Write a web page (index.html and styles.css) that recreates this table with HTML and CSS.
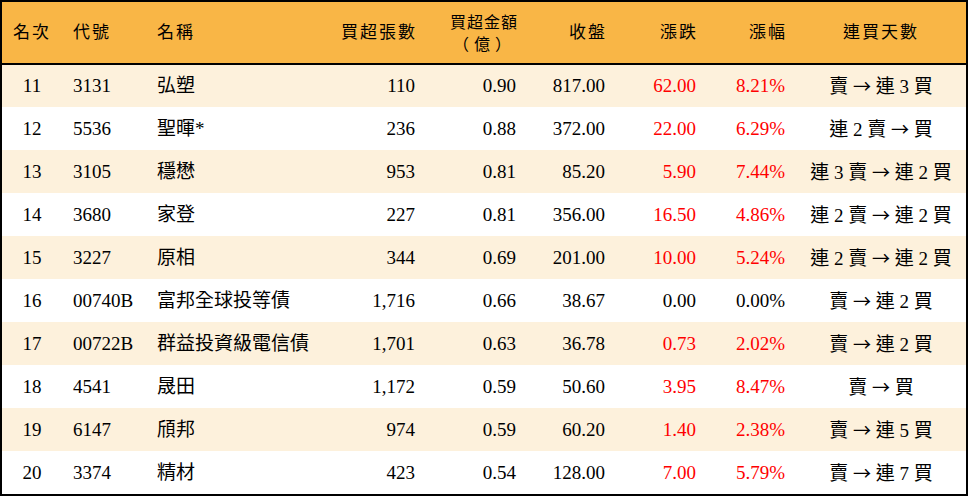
FILE: index.html
```html
<!DOCTYPE html>
<html lang="zh-Hant">
<head>
<meta charset="utf-8">
<title>買超排行</title>
<link rel="stylesheet" href="styles.css">
</head>
<body>
<div class="frame">
<table class="rank">
<colgroup>
<col class="c-rank"><col class="c-code"><col class="c-name"><col class="c-vol"><col class="c-amt"><col class="c-close"><col class="c-chg"><col class="c-pct"><col class="c-days">
</colgroup>
<thead>
<tr>
<th class="ctr">名次</th>
<th class="lft">代號</th>
<th class="lft">名稱</th>
<th class="rgt">買超張數</th>
<th class="rgt two"><span class="line">買超金額</span><span class="line unit">（億）</span></th>
<th class="rgt">收盤</th>
<th class="rgt">漲跌</th>
<th class="rgt">漲幅</th>
<th class="ctr">連買天數</th>
</tr>
</thead>
<tbody>
<tr class="alt"><td class="ctr">11</td><td class="lft">3131</td><td class="lft">弘塑</td><td class="rgt">110</td><td class="rgt">0.90</td><td class="rgt">817.00</td><td class="rgt up">62.00</td><td class="rgt up">8.21%</td><td class="ctr">賣 <span class="arr">→</span> 連 3 買</td></tr>
<tr><td class="ctr">12</td><td class="lft">5536</td><td class="lft">聖暉*</td><td class="rgt">236</td><td class="rgt">0.88</td><td class="rgt">372.00</td><td class="rgt up">22.00</td><td class="rgt up">6.29%</td><td class="ctr">連 2 賣 <span class="arr">→</span> 買</td></tr>
<tr class="alt"><td class="ctr">13</td><td class="lft">3105</td><td class="lft">穩懋</td><td class="rgt">953</td><td class="rgt">0.81</td><td class="rgt">85.20</td><td class="rgt up">5.90</td><td class="rgt up">7.44%</td><td class="ctr">連 3 賣 <span class="arr">→</span> 連 2 買</td></tr>
<tr><td class="ctr">14</td><td class="lft">3680</td><td class="lft">家登</td><td class="rgt">227</td><td class="rgt">0.81</td><td class="rgt">356.00</td><td class="rgt up">16.50</td><td class="rgt up">4.86%</td><td class="ctr">連 2 賣 <span class="arr">→</span> 連 2 買</td></tr>
<tr class="alt"><td class="ctr">15</td><td class="lft">3227</td><td class="lft">原相</td><td class="rgt">344</td><td class="rgt">0.69</td><td class="rgt">201.00</td><td class="rgt up">10.00</td><td class="rgt up">5.24%</td><td class="ctr">連 2 賣 <span class="arr">→</span> 連 2 買</td></tr>
<tr><td class="ctr">16</td><td class="lft">00740B</td><td class="lft">富邦全球投等債</td><td class="rgt">1,716</td><td class="rgt">0.66</td><td class="rgt">38.67</td><td class="rgt">0.00</td><td class="rgt">0.00%</td><td class="ctr">賣 <span class="arr">→</span> 連 2 買</td></tr>
<tr class="alt"><td class="ctr">17</td><td class="lft">00722B</td><td class="lft">群益投資級電信債</td><td class="rgt">1,701</td><td class="rgt">0.63</td><td class="rgt">36.78</td><td class="rgt up">0.73</td><td class="rgt up">2.02%</td><td class="ctr">賣 <span class="arr">→</span> 連 2 買</td></tr>
<tr><td class="ctr">18</td><td class="lft">4541</td><td class="lft">晟田</td><td class="rgt">1,172</td><td class="rgt">0.59</td><td class="rgt">50.60</td><td class="rgt up">3.95</td><td class="rgt up">8.47%</td><td class="ctr">賣 <span class="arr">→</span> 買</td></tr>
<tr class="alt"><td class="ctr">19</td><td class="lft">6147</td><td class="lft">頎邦</td><td class="rgt">974</td><td class="rgt">0.59</td><td class="rgt">60.20</td><td class="rgt up">1.40</td><td class="rgt up">2.38%</td><td class="ctr">賣 <span class="arr">→</span> 連 5 買</td></tr>
<tr><td class="ctr">20</td><td class="lft">3374</td><td class="lft">精材</td><td class="rgt">423</td><td class="rgt">0.54</td><td class="rgt">128.00</td><td class="rgt up">7.00</td><td class="rgt up">5.79%</td><td class="ctr">賣 <span class="arr">→</span> 連 7 買</td></tr>
</tbody>
</table>
</div>
</body>
</html>
```
FILE: styles.css
```css
html, body {
  margin: 0;
  padding: 0;
  background: #ffffff;
}
.frame {
  width: 968px;
  height: 496px;
  box-sizing: border-box;
  border: 2px solid #000000;
  overflow: hidden;
  background: #ffffff;
}
.rank {
  width: 964px;
  border-collapse: collapse;
  table-layout: fixed;
  font-family: "Liberation Serif", "Noto Sans CJK TC", serif;
  font-size: 19px;
  color: #000000;
}
.c-rank { width: 60px; }
.c-code { width: 84px; }
.c-name { width: 184px; }
.c-vol { width: 96px; }
.c-amt { width: 101px; }
.c-close { width: 89px; }
.c-chg { width: 91px; }
.c-pct { width: 89px; }
.c-days { width: 170px; }
.rank th {
  background: #f9b646;
  height: 61px;
  padding: 0 11px;
  font-weight: 400;
  font-size: 17px;
  letter-spacing: 2px;
  line-height: 19px;
  border-bottom: 2px solid #000000;
  white-space: nowrap;
}
.rank th.two {
  letter-spacing: 1px;
  font-size: 16px;
}
.line {
  display: block;
  height: 21px;
  line-height: 21px;
}
.unit {
  font-family: "Noto Sans CJK TC", sans-serif;
  letter-spacing: 5px;
  padding-right: 2px;
}
.rank td {
  height: 43px;
  padding: 0 11px;
  box-sizing: border-box;
  white-space: nowrap;
  line-height: 22px;
}
.rank tr.alt td {
  background: #fdf1dc;
}
.lft { text-align: left; }
.rgt { text-align: right; }
.ctr { text-align: center; }
.rank th.rgt { padding-right: 9px; }
.up { color: #ff0000; }
.arr {
  font-family: "Noto Sans CJK TC", sans-serif;
  font-size: 18px;
}
```
